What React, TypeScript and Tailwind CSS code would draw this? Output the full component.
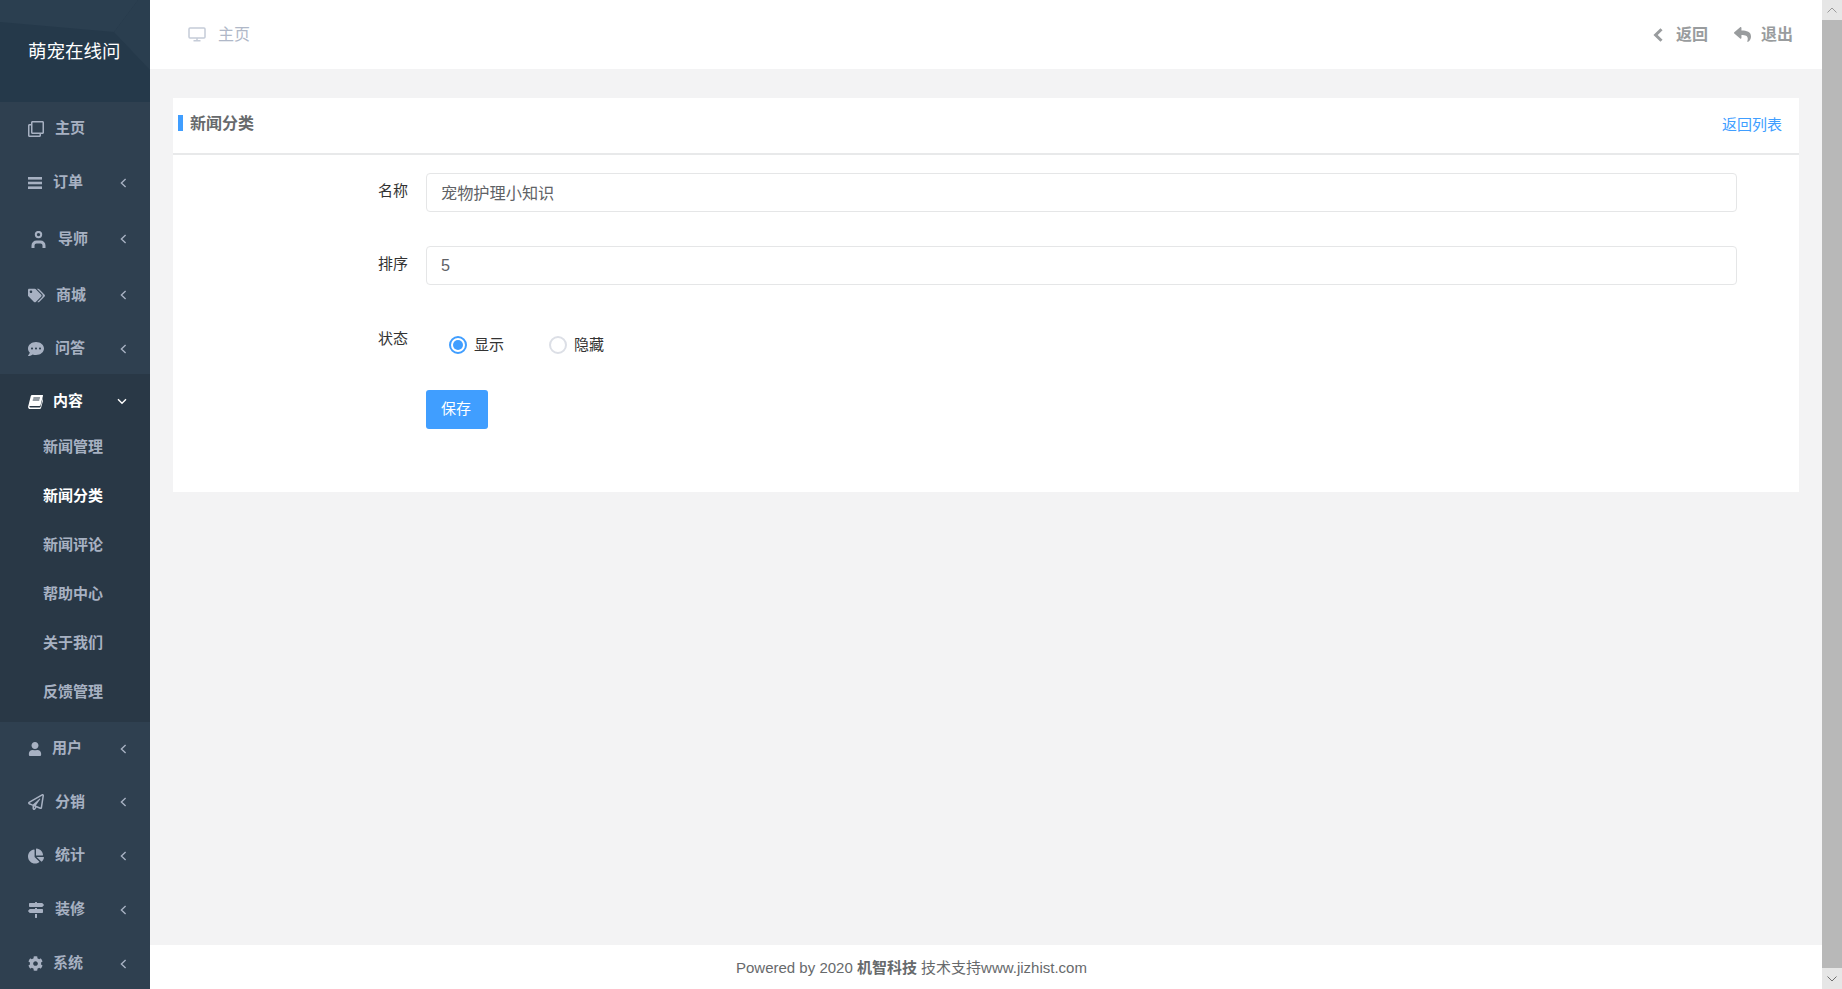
import React from "react";
import {
  FaRegClone,
  FaTags,
  FaCommentDots,
  FaUser,
  FaRegPaperPlane,
  FaChartPie,
  FaMapSigns,
  FaCog,
  FaReply,
} from "react-icons/fa";

const font = "[font-family:'Liberation_Sans','Noto_Sans_CJK_SC',sans-serif]";

function Teacher() {
  return (
    <svg width="15" height="17" viewBox="0 0 15 17" fill="none" stroke="#a7b1c2">
      <circle cx="7.5" cy="3.6" r="2.7" strokeWidth="2" />
      <path d="M2 17v-2.5a3.5 3.5 0 0 1 3.5-3.5h4a3.5 3.5 0 0 1 3.5 3.5V17" strokeWidth="3" />
    </svg>
  );
}

function Bars() {
  return (
    <svg width="14" height="12" viewBox="0 0 14 12" fill="#a7b1c2">
      <rect width="14" height="2.6" y="0" />
      <rect width="14" height="2.6" y="4.7" />
      <rect width="14" height="2.6" y="9.4" />
    </svg>
  );
}

function Book() {
  return (
    <svg width="15" height="14" viewBox="0 0 15 14" fill="currentColor">
      <path d="M4 0h10.4c.5 0 .7.4.6.8l-2.5 9.4c-.1.5-.5.8-1 .8H2.2c-.8 0-1 .5-.9.8.1.3.5.7 1.1.7h9.4c.4 0 .6-.2.7-.5l2.4-8.8.7.4-2.6 9.5c-.2.6-.7.9-1.2.9H2C.9 14 0 13 .1 11.7L2.8 1C3 .4 3.4 0 4 0Z" />
      <path d="M5.5 2.4h6.6l-.3 1H5.2ZM4.9 4.4h6.6l-.3 1H4.6Z" fill="#293846" />
    </svg>
  );
}

function Chev({ down }: { down?: boolean }) {
  return down ? (
    <svg width="10" height="7" viewBox="0 0 10 7" fill="none" stroke="currentColor" strokeWidth="1.4">
      <path d="M1 1.2 5 5.2 9 1.2" />
    </svg>
  ) : (
    <svg width="7" height="10" viewBox="0 0 7 10" fill="none" stroke="currentColor" strokeWidth="1.4">
      <path d="M5.6 1 1.4 5 5.6 9" />
    </svg>
  );
}

type Item = {
  label: string;
  icon: React.ReactNode;
  slot: string;
  h: string;
  chev?: boolean;
};

const top: Item[] = [
  { label: "主页", icon: <FaRegClone size={16} />, slot: "w-[27px]", h: "h-[53px]" },
  { label: "订单", icon: <Bars />, slot: "w-[25px]", h: "h-[55px]", chev: true },
  { label: "导师", icon: <Teacher />, slot: "w-[30px] pl-[3px]", h: "h-[57px] pt-[1px]", chev: true },
  { label: "商城", icon: <FaTags size={17} />, slot: "w-[28px]", h: "h-[56px]", chev: true },
  { label: "问答", icon: <FaCommentDots size={16} />, slot: "w-[27px]", h: "h-[51px]", chev: true },
];

const bottom: Item[] = [
  { label: "用户", icon: <FaUser size={14} />, slot: "w-[24px]", h: "h-[53px]", chev: true },
  { label: "分销", icon: <FaRegPaperPlane size={16} />, slot: "w-[27px]", h: "h-[54px]", chev: true },
  { label: "统计", icon: <FaChartPie size={16} />, slot: "w-[27px]", h: "h-[53px]", chev: true },
  { label: "装修", icon: <FaMapSigns size={16} />, slot: "w-[27px]", h: "h-[55px]", chev: true },
  { label: "系统", icon: <FaCog size={15} />, slot: "w-[25px]", h: "h-[52px] pt-[1px]", chev: true },
];

const subs = ["新闻管理", "新闻分类", "新闻评论", "帮助中心", "关于我们", "反馈管理"];

function NavRow({ item }: { item: Item }) {
  return (
    <div className={`flex items-center pl-[28px] pr-[23px] text-[#a7b1c2] ${item.h}`}>
      <span className={`flex shrink-0 items-center ${item.slot}`}>{item.icon}</span>
      <span className="flex-1 text-[15px] font-semibold">{item.label}</span>
      {item.chev && <Chev />}
    </div>
  );
}

function Sidebar() {
  return (
    <aside className="flex w-[150px] shrink-0 flex-col bg-[#2f4050]">
      <div className="relative flex h-[102px] items-center overflow-hidden bg-[#25394a] pl-[28px] pt-[2px]">
        <svg className="absolute inset-0" width="150" height="102" viewBox="0 0 150 102">
          <polygon points="0,0 138,0 114,32 0,22" fill="#2b3f50" />
          <polygon points="114,32 150,70 150,0 138,0" fill="#2a3e4f" />
        </svg>
        <span className="relative text-[18.5px] text-white">萌宠在线问</span>
      </div>
      {top.map((i) => (
        <NavRow key={i.label} item={i} />
      ))}
      <div className="bg-[#293846] pb-[5px]">
        <div className="flex h-[49px] items-center pl-[28px] pr-[23px] pt-[6px] text-white">
          <span className="flex w-[25px] shrink-0 items-center">
            <Book />
          </span>
          <span className="flex-1 text-[15px] font-semibold">内容</span>
          <Chev down />
        </div>
        {subs.map((s) => (
          <div
            key={s}
            className={`flex h-[49px] items-center pl-[43px] text-[15px] font-semibold ${
              s === "新闻分类" ? "text-white" : "text-[#a7b1c2]"
            }`}
          >
            {s}
          </div>
        ))}
      </div>
      {bottom.map((i) => (
        <NavRow key={i.label} item={i} />
      ))}
    </aside>
  );
}

function Header() {
  return (
    <header className="flex h-[69px] shrink-0 items-center justify-between bg-white pl-[38px] pr-[29px]">
      <div className="flex items-center text-[16px] text-[#b0b8c8]">
        <svg className="mr-[12px]" width="18" height="15" viewBox="0 0 18 15" fill="none" stroke="#c5ccd8" strokeWidth="1.5">
          <rect x="1" y="1" width="16" height="10" rx="1" />
          <path d="M9 11v2.5M5.5 13.8h7" />
        </svg>
        主页
      </div>
      <div className="flex items-center text-[16px] font-semibold text-[#999c9e]">
        <svg className="mr-[13px]" width="10" height="14" viewBox="0 0 10 14" fill="none" stroke="#999c9e" strokeWidth="3">
          <path d="M8.5 1.2 2.6 7l5.9 5.8" />
        </svg>
        <span className="mr-[26px]">返回</span>
        <FaReply size={17} className="mr-[10px]" />
        <span>退出</span>
      </div>
    </header>
  );
}

function Field({ label, value, cls, inputCls }: { label: string; value: string; cls: string; inputCls: string }) {
  return (
    <div className={`flex items-center ${cls}`}>
      <label className="w-[235px] pb-[2px] text-right text-[15px] text-[#333]">{label}</label>
      <input
        readOnly
        value={value}
        className={`ml-[18px] h-[39px] flex-1 rounded-[4px] border border-[#e5e6e7] bg-white px-[14px] text-[16.2px] text-[#606266] outline-none ${inputCls} ${font}`}
      />
    </div>
  );
}

function Radio({ on, label, cls }: { on?: boolean; label: string; cls: string }) {
  return (
    <div className={`flex items-center ${cls}`}>
      <span
        className={`flex h-[18px] w-[18px] items-center justify-center rounded-full border-2 ${
          on ? "border-[#409eff]" : "border-[#dcdfe6]"
        }`}
      >
        {on && <span className="h-[10px] w-[10px] rounded-full bg-[#409eff]" />}
      </span>
      <span className="ml-[7px] text-[15px] text-[#333]">{label}</span>
    </div>
  );
}

function Card() {
  return (
    <section className="h-[394px] bg-white">
      <div className="flex h-[57px] items-start justify-between border-b-2 border-[#e8e9ea] pr-[17px]">
        <div className="flex items-center pl-[5px] pt-[14px]">
          <span className="-mt-[2px] h-[16px] w-[5px] bg-[#409eff]" />
          <span className="ml-[7px] text-[16px] font-semibold leading-[24px] text-[#676a6c]">新闻分类</span>
        </div>
        <span className="pt-[15px] text-[15px] leading-[24px] text-[#409eff]">返回列表</span>
      </div>
      <div className="pr-[62px]">
        <Field label="名称" value="宠物护理小知识" cls="mt-[18px]" inputCls="pb-[2px]" />
        <Field label="排序" value="5" cls="mt-[34px]" inputCls="pb-[0px]" />
        <div className="mt-[42px] flex items-start">
          <label className="w-[235px] text-right text-[15px] leading-[24px] text-[#333]">状态</label>
          <div className="ml-[41px] mt-[7px] flex">
            <Radio on label="显示" cls="w-[100px]" />
            <Radio label="隐藏" cls="" />
          </div>
        </div>
        <button className="ml-[253px] mt-[33px] block h-[39px] w-[62px] rounded-[3px] bg-[#409eff] pr-[2px] text-[15px] text-white">
          保存
        </button>
      </div>
    </section>
  );
}

function Scrollbar() {
  return (
    <div className="flex w-[20px] shrink-0 flex-col bg-[#b8b8b8]">
      <div className="flex h-[20px] items-center justify-center bg-[#e6e6e6]">
        <svg width="10" height="6" viewBox="0 0 10 6" fill="none" stroke="#9a9a9a" strokeWidth="1">
          <path d="M0.5 5.5 5 1 9.5 5.5" />
        </svg>
      </div>
      <div className="flex-1" />
      <div className="flex h-[21px] items-center justify-center bg-[#e6e6e6]">
        <svg width="10" height="6" viewBox="0 0 10 6" fill="none" stroke="#6f6f6f" strokeWidth="1">
          <path d="M0.5 0.5 5 5 9.5 0.5" />
        </svg>
      </div>
    </div>
  );
}

export default function App() {
  return (
    <div className={`flex h-[989px] w-full overflow-hidden ${font}`}>
      <Sidebar />
      <main className="flex min-w-0 flex-1 flex-col">
        <Header />
        <div className="flex-1 bg-[#f3f3f4] px-[23px] pt-[29px]">
          <Card />
        </div>
        <footer className="flex h-[44px] shrink-0 items-center bg-white pl-[586px] pt-[3px] text-[15px] text-[#676a6c]">
          Powered by 2020&nbsp;<strong className="font-bold">机智科技</strong>&nbsp;技术支持www.jizhist.com
        </footer>
      </main>
      <Scrollbar />
    </div>
  );
}
